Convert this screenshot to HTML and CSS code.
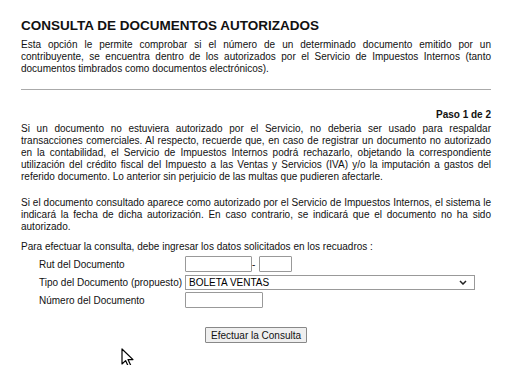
FILE: index.html
```html
<!DOCTYPE html>
<html lang="es">
<head>
<meta charset="utf-8">
<title>Consulta de Documentos Autorizados</title>
<link rel="stylesheet" href="styles.css">
</head>
<body>
<main class="page">
  <h1 class="title">CONSULTA DE DOCUMENTOS AUTORIZADOS</h1>
  <p class="text intro">Esta opción le permite comprobar si el número de un determinado documento emitido por un contribuyente, se encuentra dentro de los autorizados por el Servicio de Impuestos Internos (tanto documentos timbrados como documentos electrónicos).</p>
  <hr class="rule">
  <div class="step">Paso 1 de 2</div>
  <p class="text p1">Si un documento no estuviera autorizado por el Servicio, no deberia ser usado para respaldar transacciones comerciales. Al respecto, recuerde que, en caso de registrar un documento no autorizado en la contabilidad, el Servicio de Impuestos Internos podrá rechazarlo, objetando la correspondiente utilización del crédito fiscal del Impuesto a las Ventas y Servicios (IVA) y/o la imputación a gastos del referido documento. Lo anterior sin perjuicio de las multas que pudieren afectarle.</p>
  <p class="text p2">Si el documento consultado aparece como autorizado por el Servicio de Impuestos Internos, el sistema le indicará la fecha de dicha autorización. En caso contrario, se indicará que el documento no ha sido autorizado.</p>
  <p class="text intro-form">Para efectuar la consulta, debe ingresar los datos solicitados en los recuadros :</p>
  <form class="form">
    <div class="row">
      <label class="label" for="rut">Rut del Documento</label>
      <div class="field">
        <input class="input rut" id="rut" type="text">
        <span class="dash">-</span>
        <input class="input dv" type="text">
      </div>
    </div>
    <div class="row">
      <label class="label" for="tipo">Tipo del Documento (propuesto)</label>
      <div class="field">
        <div class="select" id="tipo">
          <span>BOLETA VENTAS</span>
          <svg class="chev" width="8" height="5" viewBox="0 0 8 5"><path d="M1 1 L4 4 L7 1" fill="none" stroke="#222" stroke-width="1.5"/></svg>
        </div>
      </div>
    </div>
    <div class="row">
      <label class="label" for="num">Número del Documento</label>
      <div class="field">
        <input class="input num" id="num" type="text">
      </div>
    </div>
    <div class="actions">
      <button class="btn" type="button">Efectuar la Consulta</button>
    </div>
  </form>
</main>
<svg class="cursor" width="14" height="20" viewBox="0 0 14 20"><path d="M1 1 L1 16 L4.6 12.6 L7.4 18.6 L9.8 17.5 L7 11.6 L12 11.6 Z" fill="#fff" stroke="#000" stroke-width="1.2" stroke-linejoin="round"/></svg>
</body>
</html>
```
FILE: styles.css
```css
html, body {
  margin: 0;
  padding: 0;
  background: #fff;
}
body {
  font-family: "Liberation Sans", Arial, sans-serif;
  color: #111;
  position: relative;
  height: 365px;
  overflow: hidden;
}
.page {
  width: 470px;
  padding: 18px 0 0 21px;
}
.title {
  margin: 0;
  font-size: 13.5px;
  line-height: 16px;
  font-weight: bold;
}
.text {
  margin: 0;
  font-size: 10px;
  line-height: 12px;
  text-align: justify;
}
.intro {
  margin-top: 5px;
}
.rule {
  margin: 14px 0 0;
  border: 0;
  border-top: 1px solid #aaa;
  height: 0;
}
.step {
  margin-top: 19px;
  text-align: right;
  font-size: 10px;
  font-weight: bold;
  line-height: 12px;
}
.p1 {
  margin-top: 2px;
}
.p2 {
  margin-top: 14px;
}
.intro-form {
  margin-top: 8px;
  text-align: left;
}
.form {
  margin-top: 2px;
}
.row {
  display: flex;
  align-items: center;
  height: 18px;
  padding-left: 18px;
}
.label {
  width: 146px;
  font-size: 10px;
}
.field {
  display: flex;
  align-items: center;
}
.input {
  box-sizing: border-box;
  height: 16px;
  border: 1px solid #999;
  border-radius: 1px;
  padding: 0 2px;
  margin: 0;
  font: 10px "Liberation Sans", Arial, sans-serif;
}
.rut { width: 67px; }
.dv { width: 33px; }
.num { width: 78px; }
.dash {
  font-size: 10px;
  width: 7px;
  text-align: left;
}
.select {
  box-sizing: border-box;
  width: 290px;
  height: 15px;
  border: 1px solid #999;
  display: flex;
  align-items: center;
  justify-content: space-between;
  padding: 0 7px 0 3px;
  font-size: 10px;
  color: #000;
}
.actions {
  display: flex;
  justify-content: center;
  margin-top: 18px;
}
.btn {
  font: 10px "Liberation Sans", Arial, sans-serif;
  background: #efefef;
  border: 1px solid #888;
  border-radius: 1px;
  height: 16px;
  padding: 0 5px;
  color: #111;
}
.cursor {
  position: absolute;
  left: 121px;
  top: 348px;
}
```
